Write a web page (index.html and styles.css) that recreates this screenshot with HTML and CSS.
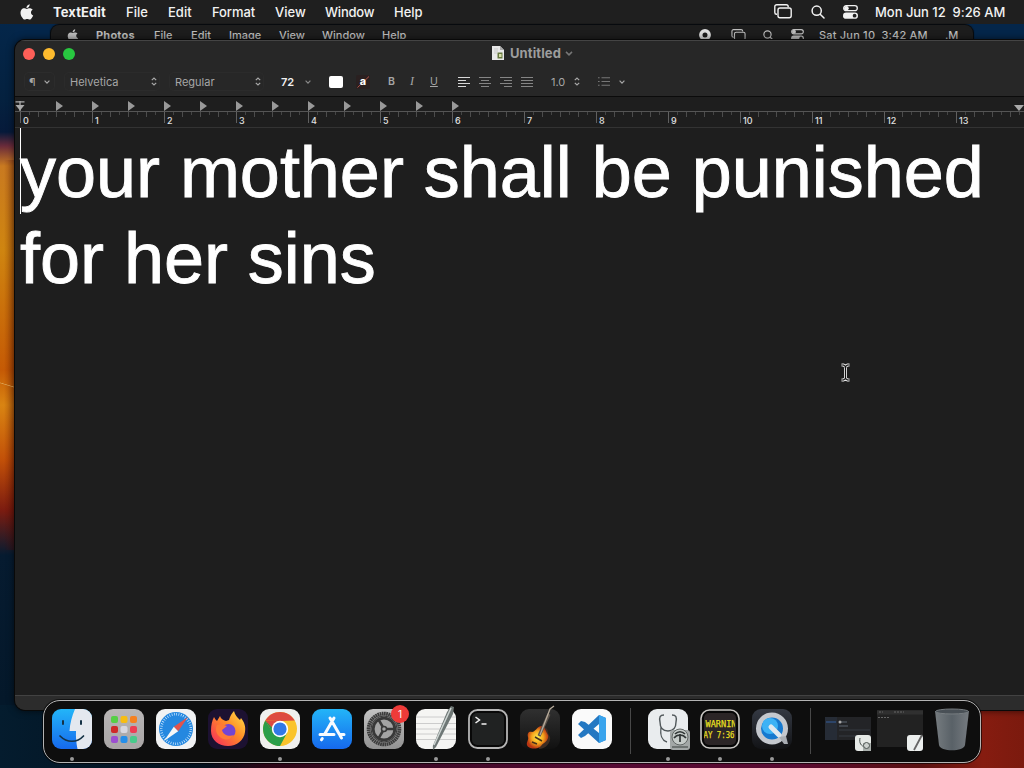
FILE: index.html
```html
<!DOCTYPE html>
<html lang="en">
<head>
<meta charset="utf-8">
<title>Untitled</title>
<link rel="stylesheet" href="styles.css">
</head>
<body>
<svg class="defs" aria-hidden="true">
  <defs>
    <symbol id="apple" viewBox="0 0 14 17"><path d="M9.900.3c.1 1.200-.4 2.200-1 2.900-.7.800-1.600 1.200-2.500 1.100C6.300 3.300 6.800 2.300 7.400 1.700 8.100.900 9.100.400 9.900.300zM13.600 12.100c-.4.900-.7 1.400-1.200 2.200-.7 1.100-1.500 2.300-2.600 2.300-1 0-1.300-.7-2.600-.7s-1.600.7-2.600.7c-1.200 0-2-1.200-2.700-2.300C-.200 11.500-.500 7.800 1.200 5.900c.7-.9 1.700-1.400 2.700-1.400 1.200 0 1.900.7 2.900.7.900 0 1.500-.7 2.900-.7 1.300 0 2.600.6 3.300 1.500-2.600 1.500-2.300 5 .6 6.100z" fill="currentColor"/></symbol>
    <symbol id="screens" viewBox="0 0 18 15"><g fill="none" stroke="currentColor" stroke-width="1.4"><path d="M3 10.300h-.4A1.900 1.900 0 0 1 .8 8.400V2.700A1.900 1.900 0 0 1 2.700.8h9.600a1.900 1.900 0 0 1 1.900 1.900v.5"/><rect x="4" y="4" width="13.200" height="9.800" rx="2"/></g></symbol>
    <symbol id="search" viewBox="0 0 14 14"><g fill="none" stroke="currentColor" stroke-width="1.500" stroke-linecap="round"><circle cx="5.700" cy="5.700" r="4.600"/><path d="M9.200 9.200 13 13"/></g></symbol>
    <symbol id="control" viewBox="0 0 15 14"><rect x=".7" y=".7" width="13.600" height="5" rx="2.500" fill="none" stroke="currentColor" stroke-width="1.300"/><circle cx="3.400" cy="3.200" r="2.300" fill="currentColor"/><rect y="7.500" width="15" height="6.300" rx="3.150" fill="currentColor"/><circle cx="11.600" cy="10.650" r="1.900" fill="#222"/></symbol>
    <symbol id="updown" viewBox="0 0 6 9"><path d="M.8 3.200 3 1l2.200 2.200M.8 5.800 3 8l2.200-2.200" fill="none" stroke="currentColor" stroke-width="1.200"/></symbol>
    <symbol id="down" viewBox="0 0 6 4"><path d="M.6.700 3 3.100 5.400.700" fill="none" stroke="currentColor" stroke-width="1.200"/></symbol>
    <linearGradient id="blue" x2="0" y2="1"><stop stop-color="#23b5f8"/><stop offset="1" stop-color="#1669ed"/></linearGradient>
    <linearGradient id="gray" x2="0" y2="1"><stop stop-color="#c4c4c4"/><stop offset="1" stop-color="#929292"/></linearGradient>
    <linearGradient id="pad" x2="0" y2="1"><stop stop-color="#b9b6b6"/><stop offset="1" stop-color="#a9a6a6"/></linearGradient>
    <linearGradient id="fire" x1="1" x2="0" y2="1"><stop stop-color="#ffe44a"/><stop offset=".45" stop-color="#ff8b26"/><stop offset="1" stop-color="#f52461"/></linearGradient>
    <linearGradient id="dark" x2="0" y2="1"><stop stop-color="#303030"/><stop offset="1" stop-color="#111"/></linearGradient>
    <linearGradient id="slate" x2="0" y2="1"><stop stop-color="#343943"/><stop offset="1" stop-color="#121316"/></linearGradient>
    <radialGradient id="burst"><stop stop-color="#fff04d"/><stop offset=".55" stop-color="#f5a51d"/><stop offset="1" stop-color="#b83412"/></radialGradient>
    <clipPath id="tile"><rect width="40" height="40" rx="9"/></clipPath>
    <clipPath id="ledclip"><rect x="4" y="4" width="31" height="32"/></clipPath>
  </defs>
</svg>

<div class="desktop">
  <header class="menubar">
    <svg class="logo"><use href="#apple"/></svg>
    <nav class="menus">
      <span class="m-app">TextEdit</span><span class="m-file">File</span><span class="m-edit">Edit</span><span class="m-third">Format</span><span class="m-view">View</span><span class="m-window">Window</span><span>Help</span>
    </nav>
    <div class="status">
      <svg class="i-screens"><use href="#screens"/></svg>
      <svg class="i-search"><use href="#search"/></svg>
      <svg class="i-control"><use href="#control"/></svg>
      <span class="clock">Mon Jun 12&nbsp; 9:26 AM</span>
    </div>
  </header>

  <div class="backbar">
    <svg class="logo"><use href="#apple"/></svg>
    <nav class="menus">
      <span class="m-app">Photos</span><span class="m-file">File</span><span class="m-edit">Edit</span><span class="m-third">Image</span><span class="m-view">View</span><span class="m-window">Window</span><span>Help</span>
    </nav>
    <div class="status">
      <svg class="i-rec" viewBox="0 0 12 12"><circle cx="6" cy="6" r="4.200" fill="none" stroke="currentColor" stroke-width="3.400"/></svg>
      <svg class="i-screens"><use href="#screens"/></svg>
      <svg class="i-search"><use href="#search"/></svg>
      <svg class="i-control"><use href="#control"/></svg>
      <span class="clock">Sat Jun 10&nbsp; 3:42 AM</span>
      <span class="sliver">.M</span>
    </div>
  </div>

  <main class="window">
    <div class="titlebar">
      <div class="lights"><i class="red"></i><i class="yellow"></i><i class="green"></i></div>
      <div class="title">
        <svg class="doc" viewBox="0 0 12 14"><path d="M0 0h8l4 4v10H0z" fill="#e8e8e8"/><path d="M8 0v4h4z" fill="#aaa"/><path d="M2 3h4M2 5h4M2 7h3" stroke="#bbb" stroke-width=".7"/><path d="M5.500 6.500h5v6h-5z" fill="#66783f"/><path d="M7 8h2.500v3H7z" fill="#d7dfa8"/></svg>
        <b>Untitled</b>
        <svg class="chev"><use href="#down"/></svg>
      </div>
    </div>
    <div class="toolbar">
      <div class="ctl para"><span>¶</span><svg class="chev"><use href="#down"/></svg></div>
      <div class="ctl font"><span>Helvetica</span><svg class="ud"><use href="#updown"/></svg></div>
      <div class="ctl face"><span>Regular</span><svg class="ud"><use href="#updown"/></svg></div>
      <div class="ctl size"><span>72</span><svg class="chev"><use href="#down"/></svg></div>
      <i class="swatch"></i>
      <svg class="texthl" viewBox="0 0 14 14"><rect width="14" height="14" rx="2" fill="#2a2020"/><path d="M1.500 12.500 13 1.500" stroke="#b05248"/><text x="3.800" y="10.300" class="hl-a">a</text></svg>
      <div class="styles"><b>B</b><em>I</em><u>U</u></div>
      <div class="aligns">
        <svg class="on" viewBox="0 0 12 10"><path d="M0 .5h12M0 3.500h8M0 6.500h12M0 9.500h8"/></svg>
        <svg viewBox="0 0 12 10"><path d="M0 .5h12M2 3.500h8M0 6.500h12M2 9.500h8"/></svg>
        <svg viewBox="0 0 12 10"><path d="M0 .5h12M4 3.500h8M0 6.500h12M4 9.500h8"/></svg>
        <svg viewBox="0 0 12 10"><path d="M0 .5h12M0 3.500h12M0 6.500h12M0 9.500h12"/></svg>
      </div>
      <div class="ctl spacing"><span>1.0</span><svg class="ud"><use href="#updown"/></svg></div>
      <div class="ctl list"><svg class="bul" viewBox="0 0 12 9"><path d="M0 .7h1.600M0 4.500h1.600M0 8.300h1.600M3.500 .7H12M3.500 4.500H12M3.500 8.300H12"/></svg><svg class="chev"><use href="#down"/></svg></div>
    </div>
    <div class="ruler">
      <div class="tabs">
        <svg class="indent" viewBox="0 0 10 10"><path d="M.5.900h9M5 0v10" stroke="#aaa" stroke-width="1.300"/><path d="M.5 4h9L5 9.500z" fill="#aaa"/></svg>
        <div class="stops"><i></i><i></i><i></i><i></i><i></i><i></i><i></i><i></i><i></i><i></i><i></i><i></i></div>
        <i class="margin-mark"></i>
      </div>
      <div class="scale"><span>0</span><span>1</span><span>2</span><span>3</span><span>4</span><span>5</span><span>6</span><span>7</span><span>8</span><span>9</span><span>10</span><span>11</span><span>12</span><span>13</span></div>
    </div>
    <div class="page"><i class="caret"></i>your mother shall be punished<br>for her sins</div>
    <div class="footer"></div>
  </main>

  <svg class="pointer" viewBox="0 0 11 19"><path d="M1.500 2H3.500L5.500 3.500 7.500 2h2M5.500 3.500v12M1.500 17h2l2-1.500 2 1.500h2" fill="none" stroke="#e8e8e8" stroke-width="3"/><path d="M1.500 2H3.500L5.500 3.500 7.500 2h2M5.500 3.500v12M1.500 17h2l2-1.500 2 1.500h2" fill="none" stroke="#111" stroke-width="1.200"/></svg>

  <footer class="dock">
    <div class="app run"><svg viewBox="0 0 40 40"><g clip-path="url(#tile)"><path d="M0 0h40v40H0z" fill="url(#blue)"/><path d="M23 0c-3 7-5 14-5.500 22H24c-.3 6 .2 12 1.500 18H40V0z" fill="#e4e8ef"/></g><path d="M11 12v3M29 12v3" stroke="#153246" stroke-width="2" stroke-linecap="round"/><path d="M8 27c7 7 17 7 23.500 0" fill="none" stroke="#153246" stroke-width="1.700" stroke-linecap="round"/></svg></div>
    <div class="app"><svg viewBox="0 0 40 40"><rect width="40" height="40" rx="9" fill="url(#pad)"/><g><rect x="7" y="7" width="7" height="7" rx="2" fill="#55cf46"/><rect x="16.500" y="7" width="7" height="7" rx="2" fill="#f7bd12"/><rect x="26" y="7" width="7" height="7" rx="2" fill="#f58120"/><rect x="7" y="17" width="7" height="7" rx="2" fill="#cf2929"/><rect x="16.500" y="17" width="7" height="7" rx="2" fill="#d7d7df"/><rect x="26" y="17" width="7" height="7" rx="2" fill="#ed3e54"/><rect x="7" y="27" width="7" height="7" rx="2" fill="#9c4fd0"/><rect x="16.500" y="27" width="7" height="7" rx="2" fill="#258ee9"/><rect x="26" y="27" width="7" height="7" rx="2" fill="#48ca8b"/></g></svg></div>
    <div class="app"><svg viewBox="0 0 40 40"><rect width="40" height="40" rx="9" fill="#f1f2f3"/><circle cx="20" cy="20" r="17" fill="#2588e0"/><circle cx="20" cy="20" r="14.800" fill="none" stroke="#d5ecff" stroke-width="2.500" stroke-dasharray=".7 1.620"/><path d="M32 8 17.800 17.800l4.400 4.400z" fill="#e2534c"/><path d="M8 32 17.800 17.800l4.400 4.400z" fill="#f7f7f7"/></svg></div>
    <div class="app"><svg viewBox="0 0 40 40"><rect width="40" height="40" rx="9" fill="#1c1131"/><path d="M6 8c1 2 2 3 3 4l3-5c1 3 3 4 6 5l3-1c1-4 3-7 5-9 1 4 3 6 6 9l1-2c3 4 5 8 4 14-1 8-8 14-17 14S3 31 3 22c0-6 1-10 3-14z" fill="url(#fire)"/><circle cx="20.500" cy="22" r="7" fill="#7345d2"/><path d="M9 16c4-2 7 0 10 1l-5 4c1 5 7 7 12 5-3 5-10 6-14 2-4-3-5-8-3-12z" fill="#ff7a35"/></svg></div>
    <div class="app run"><svg viewBox="0 0 40 40"><rect width="40" height="40" rx="9" fill="#f0f0ee"/><circle cx="20" cy="20" r="17" fill="#fac42b"/><path d="M5.300 11.500A17 17 0 0 1 34.700 11.500L20 12z" fill="#dd4a40"/><path d="M5.300 11.500A17 17 0 0 0 20 37l7-13-14 0z" fill="#2b9e49"/><path d="M5.300 11.500 13 24l7-12z" fill="#dd4a40"/><path d="m5.300 11.500 7.700 13L20 27z" fill="#2b9e49"/><circle cx="20" cy="20" r="8.200" fill="#fff"/><circle cx="20" cy="20" r="6.600" fill="#3279e6"/></svg></div>
    <div class="app"><svg viewBox="0 0 40 40"><rect width="40" height="40" rx="9" fill="url(#blue)"/><g stroke="#f8fbff" stroke-width="3" stroke-linecap="round"><path d="m22 9-9.500 16.500M18 9l11.500 20M8 25.500h14M27.500 25.500H32M10.300 29.500l-.8 1.300"/></g></svg></div>
    <div class="app gear"><svg viewBox="0 0 40 40"><rect width="40" height="40" rx="9" fill="url(#gray)"/><circle cx="20" cy="20" r="15.500" fill="#8b8b8b" stroke="#3c3c3c" stroke-width="3.600" stroke-dasharray="1.700 .5"/><circle cx="20" cy="20" r="13" fill="#9b9b9b" stroke="#3b3b3b" stroke-width="1"/><circle cx="20" cy="20" r="10.800" fill="#a3a3a3" stroke="#383838" stroke-width="2.800"/><path d="M20 20h11M20 20l-5.500-9.500M20 20l-5.500 9.500" stroke="#383838" stroke-width="2.500"/><circle cx="20" cy="20" r="2.500" fill="#a3a3a3" stroke="#383838" stroke-width="1.500"/></svg><span class="badge">1</span></div>
    <div class="app run"><svg viewBox="0 0 40 40"><rect width="40" height="40" rx="9" fill="#f5f5f3"/><path d="M0 8h40M0 14.500h40M0 20h40M0 25h40M0 30.500h40" stroke="#ccc" stroke-width="1"/><path d="m35-3 3 1-1 7-17 33-3 3-.2-4L31 3z" fill="#6e7775"/><path d="M35-1 18 36" stroke="#cdd4d2" stroke-width="1.500"/></svg></div>
    <div class="app run"><svg viewBox="0 0 40 40"><rect x="1" y="1" width="38" height="38" rx="8.500" fill="#080808" stroke="#b5b5b5" stroke-width="1.800"/><rect x="4" y="4" width="32" height="32" rx="5" fill="#202222"/><path d="m7.500 8 4 3-4 3M13.500 15h5" fill="none" stroke="#f2f2f2" stroke-width="1.500"/></svg></div>
    <div class="app"><svg viewBox="0 0 40 40"><rect width="40" height="40" rx="9" fill="url(#dark)"/><path d="M20 19c4-2 8 0 8 4 0 3 3 4 2 8-1 5-6 9-11 9z" fill="#3d2c22"/><path d="M21 17c3 0 4 3 5 5 1 3 3 4 2 7-1 4-5 5-7 8-4 4-13 3-14-1-1-3 2-5 1-8-1-4 1-6 4-5 3 0 5-5 9-6z" fill="url(#burst)"/><path d="m19 27 10-22" stroke="#5d554d" stroke-width="3.200"/><path d="M20 26 30 0l4-3" fill="none" stroke="#b6aa9a" stroke-width="1.300"/><path d="m15 28 7 4M12 33l5 2" stroke="#46311c" stroke-width="1.500"/></svg></div>
    <div class="app"><svg viewBox="0 0 40 40"><rect width="40" height="40" rx="9" fill="#fafafa"/><path d="m27 6 7 3v22l-7 3L6 15l3-3 4 1 14 11V15L13 27l-4 2-3-3z" fill="#2478c2"/><path d="m27 6 7 3v22l-7 3z" fill="#39a4ed"/></svg></div>
    <i class="sep sep-a"></i>
    <div class="app run"><svg viewBox="0 0 40 40"><rect width="40" height="40" rx="9" fill="#e9ecee"/><path d="M16 6c-4 0-5 2-4 7 0 6 2 9 8 9s8-3 8-9c1-5 0-7-4-7M13 18c-1 8 0 13 6 15" fill="none" stroke="#51585b" stroke-width="1.400"/><rect x="22" y="21" width="20" height="20" rx="3" fill="#a2a7a6"/><circle cx="32" cy="28" r="8" fill="#c5cbc8" stroke="#626866"/><path d="M27 25c3-3 7-3 10 0M26 29c3-4 9-4 12 0M32 25v8" fill="none" stroke="#303635" stroke-width="1.700"/><path d="M24 38h16" stroke="#6d7371" stroke-width="2"/></svg></div>
    <div class="app run"><svg viewBox="0 0 40 40"><rect x="1" y="1" width="38" height="38" rx="8.500" fill="#060606" stroke="#c9c7c4" stroke-width="1.600"/><rect x="4" y="4" width="32" height="32" rx="5" fill="#2b2526"/><g clip-path="url(#ledclip)"><text x="5.500" y="18" textLength="31" lengthAdjust="spacingAndGlyphs" class="led">WARNIN</text><text x="3.500" y="29" textLength="31" lengthAdjust="spacingAndGlyphs" class="led">AY 7:36</text></g></svg></div>
    <div class="app run"><svg viewBox="0 0 40 40"><rect width="40" height="40" rx="9" fill="url(#slate)"/><circle cx="20" cy="19.500" r="13.500" fill="#1679cf" stroke="#c4c8ce" stroke-width="5"/><circle cx="18" cy="17" r="8" fill="#3cb2f5"/><path d="m19 18 8 8" stroke="#dfe8ef" stroke-width="5" stroke-linecap="round"/><path d="m27 28 5 7h4l-2-8" fill="#a9adb3"/></svg></div>
    <i class="sep sep-b"></i>
    <div class="mini"><svg viewBox="0 0 46 36"><path d="M0 0h46v23H0z" fill="#232427"/><path d="M0 0h12v23H0z" fill="#262c36"/><path d="M1 5h10" stroke="#2c4468" stroke-width="2"/><path d="M14 5h8M14 9h9" stroke="#5c6470"/><path d="M14 13h31M14 19h30" stroke="#363b42"/><circle cx="15" cy="5" r="1.500" fill="#aaa"/><rect x="30" y="18" width="16" height="16" rx="3" fill="#e6eae7"/><path d="M35 21c-1 5 1 8 5 9" fill="none" stroke="#4c5552"/><rect x="38" y="26" width="8" height="8" fill="#a9afac"/><circle cx="41.500" cy="28.500" r="3" fill="#ccd1ce" stroke="#4c5552"/></svg></div>
    <div class="mini tall"><svg viewBox="0 0 46 41"><path d="M0 0h46v37H0z" fill="#222"/><path d="M0 2.500h46" stroke="#303030" stroke-width="4"/><path d="M2 2h4M17 2h10M1 7.500h11" stroke="#666" stroke-width="1" stroke-dasharray="2 1"/><rect x="30" y="25" width="16" height="16" rx="3" fill="#ecefee"/><path d="m45 25-8 15" stroke="#666" stroke-width="1.800"/></svg></div>
    <div class="trash"><svg viewBox="0 0 36 43"><defs><linearGradient id="bin"><stop stop-color="#767c80"/><stop offset=".5" stop-color="#596167"/><stop offset="1" stop-color="#767b80"/></linearGradient></defs><path d="m1 3 4 34c1 7 25 7 26 0l4-34z" fill="url(#bin)"/><ellipse cx="18" cy="3.500" rx="16.500" ry="2.500" fill="#495056" stroke="#777d81"/></svg></div>
  </footer>
</div>
</body>
</html>
```
FILE: styles.css
```css
* { box-sizing: border-box; }
body { margin: 0; overflow: hidden; font-family: Inter, "Liberation Sans", sans-serif; color: #f2f2f2; }
.defs { position: absolute; width: 0; height: 0; }
.desktop {
  position: relative; width: 1024px; height: 768px; overflow: hidden;
  display: flex; flex-direction: column;
  background:
    linear-gradient(197deg, transparent 48%, #dba050 50%, transparent 53%) 0 372px / 15px 26px no-repeat,
    linear-gradient(90deg, rgba(0,0,0,0) 4px, rgba(90,10,0,.35) 15px) 0 160px / 15px 390px no-repeat,
    linear-gradient(#04284d 0, #04213f 100px, #061a3a 132px, #6a2b3a 146px, #c97a20 166px, #cf8510 250px, #c55a05 370px, #d98412 405px, #c25008 460px, #7c1c10 510px, #061b30 555px, #04182a 700px) 0 0 / 15px 705px no-repeat,
    linear-gradient(90deg, #041c2e 0, #03101d 20%, #2c0516 26%, #3d0825 40%, #560a33 60%, #5a0a30 78%, #5a1010 90%, #861c10 96%, #7b1a0e) 0 705px / 100% 63px no-repeat,
    #04264a;
}

.menubar { flex: none; display: flex; align-items: center; height: 24px; padding: 0 19px 1px 20px; background: #1f1f1f; font-size: 13px; font-weight: 500; }
.menus { display: flex; white-space: nowrap; }
.menus span { flex: none; }
.menus .m-app { font-weight: 700; }
.logo { flex: none; }
.menubar .logo { width: 14px; height: 16px; margin-right: 19px; }
.menubar .m-app { width: 73px; letter-spacing: .1px; }
.menubar .m-file { width: 42px; }
.menubar .m-edit { width: 44px; }
.menubar .m-third { width: 63px; letter-spacing: -.1px; }
.menubar .m-view { width: 50px; }
.menubar .m-window { width: 69px; letter-spacing: -.2px; }
.status { display: flex; align-items: center; margin-left: auto; white-space: nowrap; }
.menubar .i-screens { width: 18px; height: 15px; margin-right: 19px; }
.menubar .i-search { width: 14px; height: 14px; margin-right: 18px; }
.menubar .i-control { width: 15px; height: 14px; margin-right: 17px; }
.menubar .clock { width: 130px; letter-spacing: -.03px; }

.backbar { flex: none; display: flex; align-items: center; width: 922px; height: 20px; margin: 1px 0 -5px 51px; padding: 0 16px 0 16px; background: #1d1d1d; border-radius: 8px 8px 0 0; box-shadow: 0 0 1px 1px #080808; color: #bdbdbd; font-size: 11px; font-weight: 500; }
.backbar .logo { width: 12px; height: 13px; margin-right: 17px; }
.backbar .m-app { width: 58px; letter-spacing: .2px; }
.backbar .m-file { width: 37px; }
.backbar .m-edit { width: 38px; }
.backbar .m-third { width: 50px; }
.backbar .m-view { width: 43px; }
.backbar .m-window { width: 60px; }
.i-rec { width: 12px; height: 12px; margin-right: 20px; color: #ddd; }
.backbar .i-screens { width: 15px; height: 12px; margin-right: 17px; }
.backbar .i-search { width: 11px; height: 11px; margin-right: 17px; }
.backbar .i-control { width: 13px; height: 12px; margin-right: 15px; }
.backbar .clock { width: 126px; letter-spacing: .2px; }
.sliver { width: 12px; }

.window { position: relative; flex: none; display: flex; flex-direction: column; width: 1020px; height: 670px; margin-left: 15px; background: #1e1e1e; border-radius: 10px 0 0 10px; box-shadow: 0 0 0 1px #090909, 0 0 7px 1px rgba(0,0,0,.6); overflow: hidden; }
.titlebar { flex: none; display: flex; height: 28px; padding: 7px 0 0 8px; background: #272727; border-top: 1px solid #444; }
.lights { display: flex; gap: 8px; width: 469px; }
.lights i { width: 12px; height: 12px; border-radius: 50%; }
.red { background: #fe5f58; }
.yellow { background: #febb2e; }
.green { background: #28c840; }
.title { display: flex; align-items: center; height: 14px; margin-top: -2px; color: #9d9d9d; font-size: 13px; }
.title b { margin: 0 4px 0 6px; font-weight: 700; letter-spacing: .1px; }
.doc { width: 12px; height: 14px; }
.chev { flex: none; width: 6px; height: 4px; }
.title .chev { width: 8px; height: 5px; color: #777; }

.toolbar { flex: none; display: flex; align-items: center; height: 29px; padding: 0 0 1px 10px; background: #272727; border-bottom: 1px solid #0b0b0b; color: #a6a6a6; font-size: 11px; }
.ctl { flex: none; display: flex; align-items: center; justify-content: space-between; height: 17px; border-radius: 4px; }
.ud { width: 6px; height: 9px; }
.para { width: 29px; padding: 0 4px 0 4px; box-shadow: 0 0 0 1px #2c2c2c; }
.font { width: 94px; margin-left: 11px; padding: 0 2px 0 5px; margin-right: 11px; box-shadow: 0 0 0 1px #2b2b2b; }
.face { width: 93px; padding: 0 2px 0 5px; box-shadow: 0 0 0 1px #2b2b2b; }
.size { width: 36px; margin: 0 16px 0 15px; padding: 0 3px 0 3px; color: #f0f0f0; font-weight: 600; }
.size .chev { color: #888; }
.swatch { flex: none; width: 14px; height: 12px; background: #fff; border-radius: 2px; margin: 0 13px 0 -1px; }
.texthl { flex: none; width: 14px; height: 14px; margin-right: 18px; }
.hl-a { font: 700 11px Inter, sans-serif; fill: #fff; }
.styles { display: flex; align-items: center; width: 70px; font-size: 10.5px; }
.styles > * { width: 21px; }
.styles b { font-weight: 600; }
.styles em { font-family: "Liberation Serif", serif; font-size: 12px; padding-left: 1px; }
.aligns { display: flex; gap: 9px; }
.aligns svg { width: 12px; height: 10px; fill: none; stroke: #858585; stroke-width: 1; }
.aligns .on { stroke: #d8d8d8; }
.spacing { width: 29px; margin: 0 18px 0 18px; }
.list { width: 27px; }
.bul { width: 12px; height: 9px; stroke: #777; fill: none; stroke-width: 1.1; }

.ruler { flex: none; height: 31px; border-bottom: 1px solid #333; background: #1e1e1e; }
.tabs { display: flex; height: 15px; padding-top: 4px; border-bottom: 1px solid #555; }
.indent { flex: none; width: 10px; height: 10px; margin-right: 31px; }
.stops { display: flex; flex: none; width: 948px; }
.stops i { flex: none; width: 7px; height: 10px; margin-right: 29px; background: #999; clip-path: polygon(0 0, 100% 50%, 0 100%); }
.margin-mark { flex: none; width: 10px; height: 6px; margin: 4px 0 0 10px; background: #aaa; clip-path: polygon(0 0, 100% 0, 50% 100%); }
.scale { display: flex; height: 15px; margin-left: 5px; color: #e0e0e0; font-size: 9px; font-weight: 500; line-height: 18px;
  background: repeating-linear-gradient(90deg, #606060 0 1px, transparent 1px 72px) 0 0 / 100% 11px no-repeat,
    repeating-linear-gradient(90deg, #4c4c4c 0 1px, transparent 1px 18px) 0 0 / 100% 5px no-repeat,
    repeating-linear-gradient(90deg, #444 0 1px, transparent 1px 9px) 0 0 / 100% 3px no-repeat; }
.scale span { flex: none; width: 72px; padding-left: 3px; }

.page { position: relative; flex: 1; padding: 1px 0 0 5px; font: 72px/86px "Liberation Sans", Arial, sans-serif; color: #fff; white-space: nowrap; letter-spacing: -.03px; -webkit-text-stroke: .9px #fff; }
.caret { position: absolute; left: 5px; top: 0; width: 1px; height: 86px; background: #fff; }
.footer { flex: none; height: 15px; background: #2c2c2c; border-top: 1px solid #424242; }
.pointer { position: absolute; left: 840px; top: 363px; width: 11px; height: 19px; }

.dock { position: absolute; left: 43px; top: 700px; width: 938px; height: 63px; display: flex; padding: 8px 0 0 8px; background: #0e0e0e; border: 1px solid #b4b4b4; border-radius: 17px; box-shadow: 0 0 0 1px rgba(0,0,0,.6); }
.app { position: relative; flex: none; width: 40px; height: 40px; margin-right: 12.08px; }
.app > svg { display: block; width: 40px; height: 40px; overflow: visible; }
.run::after { content: ""; position: absolute; left: 18px; top: 48px; width: 4px; height: 4px; border-radius: 50%; background: #999; }
.gear { margin-left: -.5px; margin-right: 12px; }
.badge { position: absolute; left: 27px; top: -4px; width: 18px; height: 18px; border-radius: 50%; background: #ee3b39; color: #fff; font-size: 10px; line-height: 18px; text-align: center; }
.sep { flex: none; width: 1px; height: 46px; margin-top: -1px; background: #484848; }
.sep-a { margin-left: 5.700px; margin-right: 17px; }
.sep-b { margin-left: 6px; margin-right: 14px; }
.led { font: 400 9px "DejaVu Sans Mono", monospace; fill: #e6df20; stroke: #e6df20; stroke-width: .25px; }
.mini { flex: none; width: 46px; height: 36px; margin: 8px 6px 0 0; }
.mini svg, .trash svg { display: block; width: 100%; height: 100%; }
.mini.tall { height: 41px; margin: 1px 11px 0 0; }
.trash { flex: none; width: 36px; height: 43px; margin-top: -1px; }
```
